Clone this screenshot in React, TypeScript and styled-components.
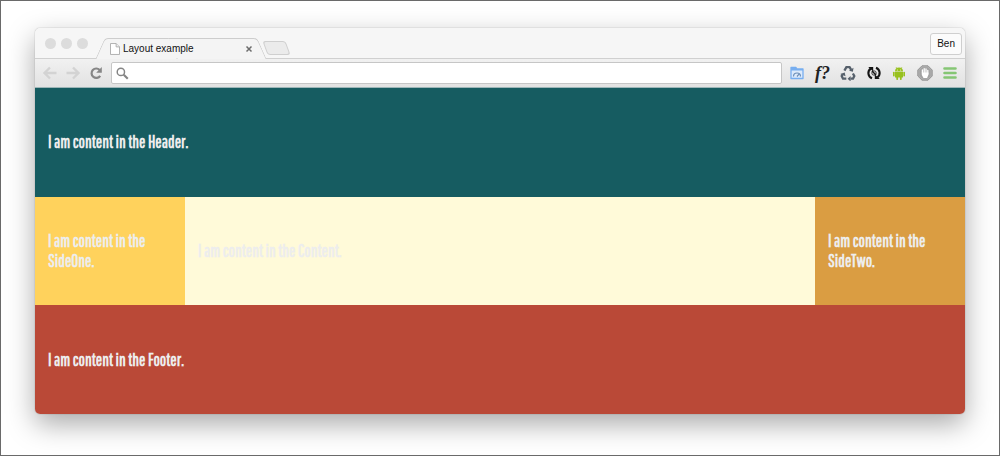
import React from "react";
import styled, { createGlobalStyle } from "styled-components";

const GlobalStyle = createGlobalStyle`
  * { box-sizing: border-box; }
  body {
    margin: 0;
    background: #fff;
    font-family: "Liberation Sans", Arial, sans-serif;
  }
  button, input { font: inherit; }
`;

const Page = styled.main`
  display: flex;
  min-height: 100vh;
  padding: 27px 34px 41px;
  border: 1px solid #6a6a6a;
`;

const BrowserWindow = styled.div`
  flex: 1;
  display: flex;
  flex-direction: column;
  min-width: 0;
  border-radius: 5px;
  overflow: hidden;
  box-shadow: 0 0 1px rgba(0, 0, 0, 0.5), 0 10px 28px rgba(0, 0, 0, 0.34);
`;

const TitleBar = styled.div`
  display: flex;
  align-items: flex-end;
  height: 31px;
  padding: 0 3px 0 10px;
  background: #f6f6f6;
  box-shadow: inset 0 -1px #d0d0d0;
`;

const Lights = styled.div`
  display: flex;
  align-self: center;
  gap: 5px;
  margin-right: 12px;
`;

const Light = styled.button`
  width: 11px;
  height: 11px;
  padding: 0;
  border: 0;
  border-radius: 50%;
  background: #dcdcdc;
`;

const Tab = styled.div`
  position: relative;
  z-index: 0;
  display: flex;
  align-items: center;
  width: 162px;
  height: 21px;
  padding: 0 9px;

  &::before,
  &::after {
    content: "";
    position: absolute;
    z-index: -1;
    top: 0;
    bottom: 0;
    background: #f4f4f4;
    border-top: 1px solid #cdcdcd;
  }
  &::before {
    left: 0;
    right: 50%;
    border-left: 1px solid #cdcdcd;
    border-top-left-radius: 4px;
    transform: skewX(-24deg);
  }
  &::after {
    left: 45%;
    right: 0;
    border-right: 1px solid #cdcdcd;
    border-top-right-radius: 4px;
    transform: skewX(24deg);
  }
`;

const TabTitle = styled.span`
  flex: 1;
  margin-left: 2px;
  font-size: 10px;
  line-height: 16px;
  color: #111;
`;

const IconButton = styled.button`
  display: flex;
  padding: 0;
  border: 0;
  background: none;
`;

const NewTab = styled.button`
  width: 23px;
  height: 14px;
  margin: 0 auto 4px 3px;
  padding: 0;
  border: 1px solid #cfcfcf;
  border-radius: 3px;
  background: #ebebeb;
  transform: skewX(20deg);
`;

const Profile = styled.button`
  align-self: center;
  height: 22px;
  padding: 0 6px;
  border: 1px solid #cfcfcf;
  border-radius: 3px;
  background: #fbfbfb;
  font-size: 10px;
  color: #111;
`;

const Toolbar = styled.div`
  display: flex;
  align-items: center;
  height: 29px;
  padding: 0 7px;
  border-bottom: 1px solid #9db6b8;
  background: linear-gradient(#f1f1f1, #e2e2e2);
`;

const Navigation = styled.nav`
  display: flex;
  gap: 7px;
  margin-right: 7px;
`;

const AddressBar = styled.label`
  flex: 1;
  display: flex;
  align-items: center;
  gap: 4px;
  height: 22px;
  padding: 0 4px;
  border: 1px solid #c6c6c6;
  border-radius: 2px;
  background: #fff;
`;

const AddressInput = styled.input`
  flex: 1;
  min-width: 0;
  padding: 0;
  border: 0;
  outline: 0;
  background: none;
  font-size: 12px;
`;

const Extensions = styled.div`
  display: flex;
  justify-content: space-between;
  width: 169px;
  margin-left: 7px;
`;

const FontMark = styled.span`
  width: 16px;
  font-family: "Liberation Serif", serif;
  font-size: 18px;
  font-style: italic;
  font-weight: 700;
  line-height: 16px;
  color: #222;
`;

const Row = styled.div`
  flex: 1;
  display: flex;
`;

const Region = styled.section<{ $color: string; $width?: string }>`
  display: flex;
  align-items: center;
  flex: ${({ $width }) => ($width ? `0 0 ${$width}` : "1")};
  min-width: 0;
  padding: 16px 13px;
  background: ${({ $color }) => $color};
`;

const Copy = styled.p`
  margin: 0;
  font-family: "Pathway Gothic One", Oswald, "Open Sans Condensed", "Liberation Sans", sans-serif;
  font-size: 17px;
  font-weight: 700;
  line-height: 20px;
  color: #ededed;
`;

const Icon = ({ children, size = 16 }: { children: React.ReactNode; size?: number }) => (
  <svg width={size} height={size} viewBox="0 0 16 16" fill="none" aria-hidden="true">
    {children}
  </svg>
);

const extensions = [
  {
    label: "Page speed",
    art: (
      <Icon>
        <path d="M2 2.500h5l1 1.500h6v9.500H2z" fill="#dceafb" stroke="#77aef0" strokeWidth="1.300" strokeLinejoin="round" />
        <path d="M2 2.500h5l1 1.500h6v1.500H2z" fill="#77aef0" />
        <path d="M4.500 11.500a3.500 3.500 0 0 1 7 0M8 11.500l2-2.300" stroke="#6d8fb8" strokeWidth="1.200" />
      </Icon>
    ),
  },
  { label: "Font finder", art: <FontMark>f?</FontMark> },
  {
    label: "Recycle",
    art: (
      <Icon>
        <g stroke="#56606b" strokeWidth="2.300">
          <path d="M4.400 5.600 6.400 2.200h3.200l1.600 2.600" />
          <path d="M12.900 8.500 14.300 11l-1.300 2.700h-2.500" />
          <path d="M6.300 13.700H3L1.700 11l1-1.800" />
        </g>
        <path d="m9 5.800 3.900 1 .6-4zM10.600 10.900v5.600L7.600 13.700zM.2 8.900l4.500-1.400.8 3.700z" fill="#56606b" />
      </Icon>
    ),
  },
  {
    label: "Sync",
    art: (
      <Icon>
        <path d="M6 13.300A5.600 5.600 0 0 1 4.600 3.600M10 2.700a5.600 5.600 0 0 1 1.400 9.700" stroke="#151515" strokeWidth="2.100" />
        <path d="M2.200 2h5v4.500zM13.800 14h-5V9.500z" fill="#151515" />
        <path d="M6 6 10 10" stroke="#151515" strokeWidth="1.500" />
        <circle cx="8" cy="8" r="2.200" stroke="#151515" strokeWidth=".8" />
      </Icon>
    ),
  },
  {
    label: "Android",
    art: (
      <Icon>
        <g fill="#98c11e">
          <path d="M4 6.500a4 4 0 0 1 8 0zM4 7h8v5.500H4z" />
          <rect x="2" y="6.800" width="1.700" height="4.700" rx=".8" />
          <rect x="12.300" y="6.800" width="1.700" height="4.700" rx=".8" />
          <rect x="5.300" y="11" width="1.800" height="4" rx=".8" />
          <rect x="8.900" y="11" width="1.800" height="4" rx=".8" />
          <path d="m5 2 1.200 2M11 2 9.800 4" stroke="#98c11e" strokeWidth=".6" />
          <circle cx="6.300" cy="4.900" r=".5" fill="#fff" />
          <circle cx="9.700" cy="4.900" r=".5" fill="#fff" />
        </g>
      </Icon>
    ),
  },
  {
    label: "Blocker",
    art: (
      <Icon>
        <path d="M5 .8h6L15.200 5v6L11 15.200H5L.8 11V5z" fill="#a2a2a2" stroke="#989898" />
        <path d="M5.200 1.900h5.600L14 5.200v5.600L10.800 14H5.200L2 10.800V5.200z" stroke="#bdbdbd" strokeWidth=".6" />
        <path d="M5.400 8V5M7.200 8V3.600M9 8V3.900M10.800 9V5.400" stroke="#fff" strokeWidth="1.300" strokeLinecap="round" />
        <path d="M4.800 7.500h6.600v2.300L10.100 13H6.500l-1.700-3z" fill="#fff" />
      </Icon>
    ),
  },
  {
    label: "Menu",
    art: (
      <Icon>
        <path d="M2.500 3.500h11M2.500 8h11M2.500 12.500h11" stroke="#85c674" strokeWidth="2.600" strokeLinecap="round" />
      </Icon>
    ),
  },
];

export default function App() {
  return (
    <>
      <GlobalStyle />
      <Page>
        <BrowserWindow>
          <TitleBar>
            <Lights>
              <Light aria-label="Close window" />
              <Light aria-label="Minimize window" />
              <Light aria-label="Zoom window" />
            </Lights>
            <Tab>
              <Icon size={12}>
                <path d="M2 .7h7.500L14 5.200v10.100H2z" fill="#fff" stroke="#aaa" strokeWidth="1.200" />
                <path d="M9.500.7v4.500H14" fill="#eee" stroke="#aaa" strokeWidth="1.200" />
              </Icon>
              <TabTitle>Layout example</TabTitle>
              <IconButton aria-label="Close tab">
                <Icon size={8}>
                  <path d="m3 3 10 10M13 3 3 13" stroke="#6c6c6c" strokeWidth="3" />
                </Icon>
              </IconButton>
            </Tab>
            <NewTab aria-label="New tab" />
            <Profile>Ben</Profile>
          </TitleBar>
          <Toolbar>
            <Navigation aria-label="History">
              <IconButton aria-label="Back">
                <Icon>
                  <path d="M14.500 8H3M8 2.500 2.500 8 8 13.500" stroke="#d3d3d3" strokeWidth="2.400" />
                </Icon>
              </IconButton>
              <IconButton aria-label="Forward">
                <Icon>
                  <path d="M1.500 8H13M8 2.500 13.500 8 8 13.500" stroke="#d3d3d3" strokeWidth="2.400" />
                </Icon>
              </IconButton>
              <IconButton aria-label="Reload">
                <Icon>
                  <path d="M12.200 10.800A4.700 4.700 0 1 1 11.700 5" stroke="#868686" strokeWidth="2.200" />
                  <path d="M13.800 2v5.700H8.200z" fill="#868686" />
                </Icon>
              </IconButton>
            </Navigation>
            <AddressBar>
              <Icon size={13}>
                <circle cx="6" cy="6" r="4.500" stroke="#858585" strokeWidth="1.800" />
                <path d="m9.500 9.500 5 5" stroke="#858585" strokeWidth="2.600" />
              </Icon>
              <AddressInput type="text" aria-label="Address" />
            </AddressBar>
            <Extensions>
              {extensions.map(({ label, art }) => (
                <IconButton key={label} aria-label={label}>
                  {art}
                </IconButton>
              ))}
            </Extensions>
          </Toolbar>
          <Row>
            <Region as="header" $color="#165c61">
              <Copy>I am content in the Header.</Copy>
            </Region>
          </Row>
          <Row>
            <Region as="aside" $color="#ffd25c" $width="150px">
              <Copy>I am content in the SideOne.</Copy>
            </Region>
            <Region $color="#fffad9">
              <Copy>I am content in the Content.</Copy>
            </Region>
            <Region as="aside" $color="#da9d42" $width="150px">
              <Copy>I am content in the SideTwo.</Copy>
            </Region>
          </Row>
          <Row>
            <Region as="footer" $color="#ba4937">
              <Copy>I am content in the Footer.</Copy>
            </Region>
          </Row>
        </BrowserWindow>
      </Page>
    </>
  );
}
